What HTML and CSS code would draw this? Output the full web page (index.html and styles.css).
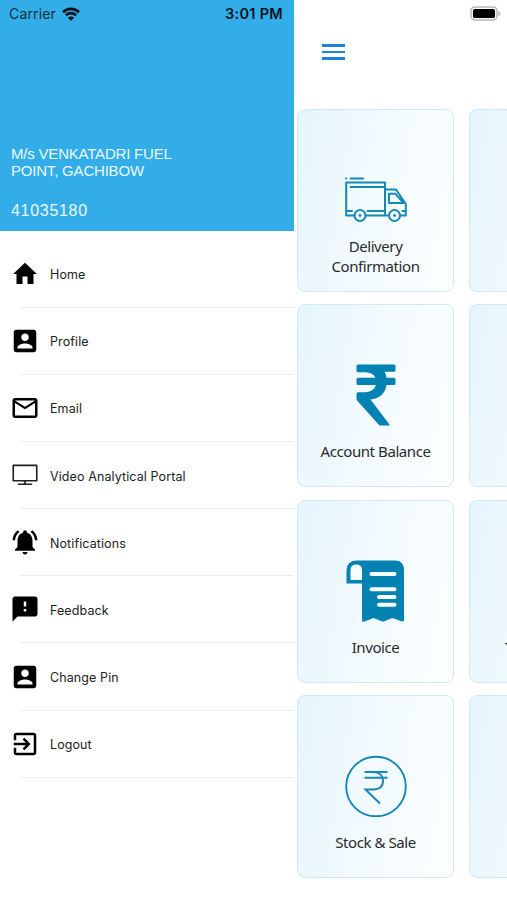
FILE: index.html
```
<!doctype html>
<html>
<head>
	<meta charset="utf-8">
	<title>Home</title>
	<link rel="stylesheet" href="styles.css">
</head>
<body>
	<div class="status-bar">
		<span class="carrier">Carrier</span>
		<svg class="wifi" viewBox="0 0 18 14">
			<path d="M1 5.200a11.500 11.500 0 0 1 16 0M3.800 8.300a7.500 7.500 0 0 1 10.400 0" fill="none" stroke="#06141c" stroke-width="2.700"/>
			<path d="M9 13.800L5.800 10.800a4.600 4.600 0 0 1 6.400 0z" fill="#06141c"/>
		</svg>
		<span class="time">3:01 PM</span>
		<svg class="battery" viewBox="0 0 31 15">
			<rect x="1" y="1" width="26" height="13" rx="4" fill="#fff" stroke="#b9b9b9" stroke-width="1.600"/>
			<rect x="3" y="3" width="22" height="9" rx="1.600" fill="#000"/>
			<path d="M28.500 5v5q2-1 2-2.500t-2-2.500z" fill="#b3b3b3"/>
		</svg>
	</div>

	<div class="screen">
		<div class="drawer">
			<div class="account">
				<div class="name">M/s VENKATADRI FUEL<br>POINT, GACHIBOW</div>
				<div class="code">41035180</div>
			</div>
			<ul class="menu">
				<li>
					<svg viewBox="0 0 24 24"><path d="M10 20v-6h4v6h4.800v-8H21.500L12 3 2.500 12h2.700v8z"/></svg>
					<span>Home</span>
				</li>
				<li>
					<svg viewBox="0 0 24 24"><path d="M3 5v14c0 1.100.89 2 2 2h14c1.100 0 2-.9 2-2V5c0-1.100-.9-2-2-2H5c-1.110 0-2 .9-2 2zm12 4c0 1.660-1.340 3-3 3s-3-1.340-3-3 1.340-3 3-3 3 1.340 3 3zm-9 8c0-2 4-3.100 6-3.100s6 1.100 6 3.100v1H6v-1z"/></svg>
					<span>Profile</span>
				</li>
				<li>
					<svg viewBox="0 0 24 24"><path d="M20 4H4c-1.100 0-1.990.9-1.990 2L2 18c0 1.100.9 2 2 2h16c1.100 0 2-.9 2-2V6c0-1.100-.9-2-2-2zm0 14H4V8l8 5 8-5v10zm-8-7L4 6h16l-8 5z"/></svg>
					<span>Email</span>
				</li>
				<li>
					<svg viewBox="0 0 24 24"><path d="M2.600 3.300h18.800v12.300H2.600zM12 15.600v2.700M6.300 18.400h11.400" fill="none" stroke="#222" stroke-width="1.300" stroke-linejoin="round" transform="translate(0 1)"/></svg>
					<span>Video Analytical Portal</span>
				</li>
				<li>
					<svg viewBox="0 0 24 24"><path d="M7.580 4.080L6.150 2.650C3.750 4.480 2.170 7.300 2.030 10.500h2c.15-2.650 1.510-4.970 3.550-6.420zm12.390 6.420h2c-.15-3.200-1.730-6.020-4.120-7.850l-1.420 1.430c2.020 1.450 3.390 3.770 3.540 6.420zM18 11c0-3.070-1.640-5.640-4.500-6.320V4c0-.83-.67-1.500-1.500-1.500s-1.500.67-1.500 1.500v.68C7.630 5.360 6 7.920 6 11v5l-2 2v1h16v-1l-2-2v-5zm-6 11c.14 0 .27-.01.4-.04.65-.14 1.180-.58 1.440-1.180.1-.24.15-.5.15-.78h-4c.01 1.100.9 2 2.010 2z"/></svg>
					<span>Notifications</span>
				</li>
				<li>
					<svg viewBox="0 0 24 24"><path d="M20 2H4c-1.100 0-1.990.9-1.990 2L2 22l4-4h14c1.100 0 2-.9 2-2V4c0-1.100-.9-2-2-2zm-7 12h-2v-2h2v2zm0-4h-2V6h2v4z"/></svg>
					<span>Feedback</span>
				</li>
				<li>
					<svg viewBox="0 0 24 24"><path d="M3 5v14c0 1.100.89 2 2 2h14c1.100 0 2-.9 2-2V5c0-1.100-.9-2-2-2H5c-1.110 0-2 .9-2 2zm12 4c0 1.660-1.340 3-3 3s-3-1.340-3-3 1.340-3 3-3 3 1.340 3 3zm-9 8c0-2 4-3.100 6-3.100s6 1.100 6 3.100v1H6v-1z"/></svg>
					<span>Change Pin</span>
				</li>
				<li>
					<svg viewBox="0 0 24 24"><path d="M10.090 15.590L11.500 17l5-5-5-5-1.410 1.410L12.670 11H3v2h9.670l-2.580 2.590zM19 3H5c-1.110 0-2 .9-2 2v4h2V5h14v14H5v-4H3v4c0 1.100.89 2 2 2h14c1.100 0 2-.9 2-2V5c0-1.100-.9-2-2-2z"/></svg>
					<span>Logout</span>
				</li>
			</ul>
		</div>

		<div class="home">
			<div class="toolbar">
				<div class="burger"><i></i><i></i><i></i></div>
			</div>
			<div class="cards">
				<div class="card">
					<svg viewBox="0 0 62 62">
						<g fill="none" stroke="#1688b4" stroke-width="2" stroke-linejoin="round" stroke-linecap="round">
							<path d="M1 9.500h.2M5.500 9.500h12.500"/>
							<path d="M9.500 46.500H1.200V13.500H40v33H20.500M5.500 18H39M2 42h5M22.500 42H39M40 46.500h4M40 20.500h11L60.800 35v11.500H55M44 24.800h6.500L58.500 34H44zM60.500 42h-3"/>
							<circle cx="15" cy="46.500" r="5.500"/>
							<circle cx="49.500" cy="46.500" r="5.500"/>
						</g>
						<circle cx="15" cy="46.500" r="1.400" fill="#1688b4"/>
						<circle cx="49.500" cy="46.500" r="1.400" fill="#1688b4"/>
					</svg>
					<p>Delivery<br>Confirmation</p>
				</div>
				<div class="card"></div>
				<div class="card">
					<svg viewBox="0 0 62 62">
						<path d="M13 .5h36q1.500 0 1.500 1.500v4.200q0 1.500-1.500 1.500H39.500q1.500 2.500 2 6H49q1.500 0 1.500 1.500v4.300q0 1.500-1.500 1.500h-7.500C40.500 29 35 34.500 25.500 35.500L44.500 60.500q.5 1-.7 1H34.500L12 36.500q-.5-.6-.5-1.500v-5.200q0-1.500 1.500-1.500h7q8.500 0 11-7.300H13q-1.500 0-1.500-1.500v-4.300q0-1.500 1.500-1.500h17.500Q28 8.500 20.500 8.200H13q-1.500 0-1.500-1.500V2Q11.500.5 13 .5z" fill="#0482b1"/>
					</svg>
					<p>Account Balance</p>
				</div>
				<div class="card"></div>
				<div class="card">
					<svg viewBox="0 0 62 62">
						<path d="M12 .5h38q9 0 9 9.500v50q0 2-2 1.500L47.500 58l-9.500 3.800L28.500 58 19 61.700q-2 .3-2-1.700V23.500H1.500V10Q2 .5 12 .5z" fill="#0482b1"/>
						<path d="M5.500 20V10q0-5.500 5.700-5.500T17 10v10z" fill="#f7fdfe"/>
						<path d="M26.500 14H49.500M26.500 29.300H49.500M34 37H49.500M34 44.700H49.500" stroke="#f7fdfe" stroke-width="4" stroke-linecap="round"/>
					</svg>
					<p>Invoice</p>
				</div>
				<div class="card">
					<p class="cut">T</p>
				</div>
				<div class="card">
					<svg viewBox="0 0 62 62">
						<g fill="none" stroke="#1688b4" stroke-width="1.900">
							<circle cx="31" cy="31.500" r="29.800"/>
							<path d="M19.500 17h23M19.500 22.800h23M28 17c7 0 10 4 10 8.500 0 6-4 9-10 9H20.500L35 48.500"/>
						</g>
					</svg>
					<p>Stock &amp; Sale</p>
				</div>
				<div class="card"></div>
			</div>
		</div>
	</div>
</body>
</html>
```
FILE: styles.css
```
*{
	margin:0;
	padding:0;
	box-sizing:border-box;
}
body{
	width:507px;
	height:900px;
	overflow:hidden;
	background:#fff;
	font-family:"Liberation Sans",Arial,sans-serif;
}
/* sits over the drawer and the page */
.status-bar{
	position:absolute;
	top:0;
	left:0;
	z-index:10;
	width:507px;
	height:27px;
	padding:0 6px 0 9px;
	display:flex;
	align-items:center;
	font-family:Inter,sans-serif;
	color:#06141c;
}
.carrier{
	width:53px;
	font-size:14px;
	letter-spacing:.15px;
	color:#0b3146;
}
.wifi{
	width:18px;
	height:14px;
}
.time{
	width:60px;
	margin-left:145px;
	font-size:14.5px;
	font-weight:600;
	letter-spacing:.3px;
	white-space:nowrap;
}
.battery{
	width:31px;
	height:15px;
	margin-left:auto;
}
.screen{
	display:flex;
	width:507px;
	height:900px;
	overflow:hidden;
}
.drawer{
	flex:none;
	width:294px;
}
.account{
	height:230.5px;
	padding:146px 0 0 11px;
	background:#33ade7;
	color:#e9f8ff;
	font-size:15px;
	line-height:16.5px;
}
.name{
	letter-spacing:-.2px;
}
.code{
	margin-top:22px;
	font-size:16px;
	line-height:20px;
	letter-spacing:.7px;
}
.menu{
	padding-top:10px;
	list-style:none;
}
.menu li{
	display:flex;
	align-items:center;
	height:67.17px;
	margin-left:20px;
	border-bottom:1.5px solid #ececec;
	font-family:Inter,sans-serif;
	font-size:12.5px;
	letter-spacing:.1px;
	color:#222;
}
.menu svg{
	flex:none;
	width:30px;
	height:30px;
	margin:0 10px 0 -10px;
}
.menu span{
	padding-top:2px;
}
.home{
	flex:none;
	width:340px;
	padding-left:3px;
}
.toolbar{
	height:109px;
	padding:44px 0 0 25px;
}
.burger{
	display:flex;
	flex-direction:column;
	gap:4px;
	width:23px;
}
.burger i{
	height:2.5px;
	background:#2080e2;
}
.cards{
	display:grid;
	grid-template-columns:157px 157px;
	grid-auto-rows:183px;
	gap:12.4px 15px;
}
.card{
	display:flex;
	flex-direction:column;
	align-items:center;
	padding-top:59px;
	border:1px solid #d3e8f2;
	border-radius:8px;
	background:linear-gradient(100deg,#e5f5fd,#f3fbfe 50%,#fbffff);
	font-family:"Noto Sans",sans-serif;
	font-size:15px;
	line-height:20px;
	letter-spacing:-.42px;
	text-align:center;
	color:#282c2e;
}
.card svg{
	flex:none;
	width:62px;
	height:62px;
	margin-bottom:15px;
}
.card:first-child svg{
	margin-bottom:5px;
}
.card .cut{
	width:85px;
	margin-top:77px;
	text-align:left;
}
```
